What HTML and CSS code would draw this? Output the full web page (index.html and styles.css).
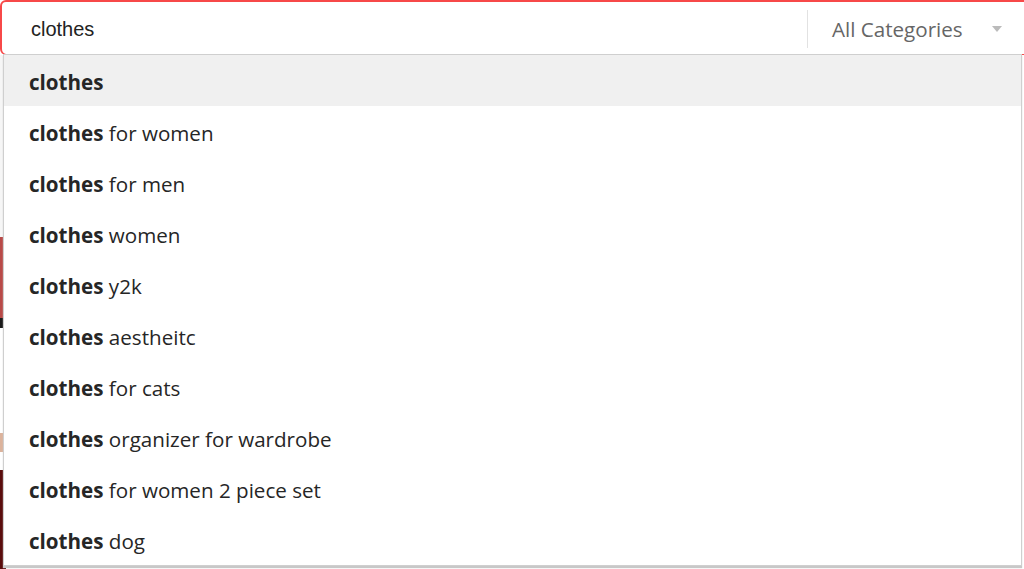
FILE: index.html
```html
<!DOCTYPE html>
<html lang="en">
<head>
    <meta charset="UTF-8">
    <meta name="viewport" content="width=device-width, initial-scale=1.0">
    <title>Search</title>
    <link rel="stylesheet" href="styles.css">
</head>
<body>
    <div class="search">
        <div class="search-box">
            <input type="text" class="search-input" value="clothes">
            <div class="category">
                <span>All Categories</span>
                <span class="caret"></span>
            </div>
        </div>
        <ul class="suggestions">
            <li class="active"><b>clothes</b></li>
            <li><b>clothes</b> for women</li>
            <li><b>clothes</b> for men</li>
            <li><b>clothes</b> women</li>
            <li><b>clothes</b> y2k</li>
            <li><b>clothes</b> aestheitc</li>
            <li><b>clothes</b> for cats</li>
            <li><b>clothes</b> organizer for wardrobe</li>
            <li><b>clothes</b> for women 2 piece set</li>
            <li><b>clothes</b> dog</li>
        </ul>
    </div>

    <div class="page">
        <div class="block light"></div>
        <div class="block red"></div>
        <div class="block black"></div>
        <div class="block gap"></div>
        <div class="block beige"></div>
        <div class="block gap2"></div>
        <div class="block dark"></div>
    </div>
</body>
</html>
```

FILE: styles.css
```css
body {
    margin: 0;
    padding: 0;
    background: #fff;
    font-family: "Open Sans", sans-serif;
    overflow: hidden;
    height: 569px;
}
.search {
    position: relative;
    width: 1030px;
    z-index: 2;
}
.search-box {
    display: flex;
    align-items: center;
    height: 52px;
    border: 2px solid #f74848;
    border-bottom-width: 1px;
    border-radius: 6px;
    background: #fff;
}
.search-input {
    flex: 1;
    border: none;
    outline: none;
    padding: 3px 0 0 29px;
    height: 100%;
    box-sizing: border-box;
    font-family: "Liberation Sans", Arial, sans-serif;
    font-size: 20px;
    color: #222;
    background: transparent;
}
.category {
    display: flex;
    align-items: center;
    box-sizing: border-box;
    width: 221px;
    height: 38px;
    margin-top: 2px;
    border-left: 1px solid #e2e2e2;
    padding-left: 24px;
    color: #666;
    font-size: 20.6px;
}
.caret {
    margin-left: 29px;
    width: 0;
    height: 0;
    border-left: 5px solid transparent;
    border-right: 5px solid transparent;
    border-top: 6px solid #bbb;
}
.suggestions {
    position: absolute;
    top: 54px;
    left: 3px;
    width: 1017px;
    margin: 0;
    padding: 0;
    list-style: none;
    background: #fff;
    border: 1px solid #cfcfcf;
    box-shadow: 0 2px 1px #c8c8c8;
}
.suggestions li {
    height: 51px;
    line-height: 54px;
    padding-left: 25px;
    font-size: 20.6px;
    color: #262626;
}
.suggestions li.active {
    background: #f0f0f0;
}
.suggestions b {
    font-weight: 700;
}
.page {
    display: flex;
    flex-direction: column;
    width: 6px;
}
.block {
    width: 6px;
}
.light { height: 182px; background: #f6f6f6; }
.red { height: 81px; background: #b84a48; }
.black { height: 10px; background: #1a1a1a; }
.gap { height: 105px; background: #fff; }
.beige { height: 19px; background: #dcb39c; }
.gap2 { height: 18px; background: #fff; }
.dark { height: 99px; background: #5a0c0c; }
```
